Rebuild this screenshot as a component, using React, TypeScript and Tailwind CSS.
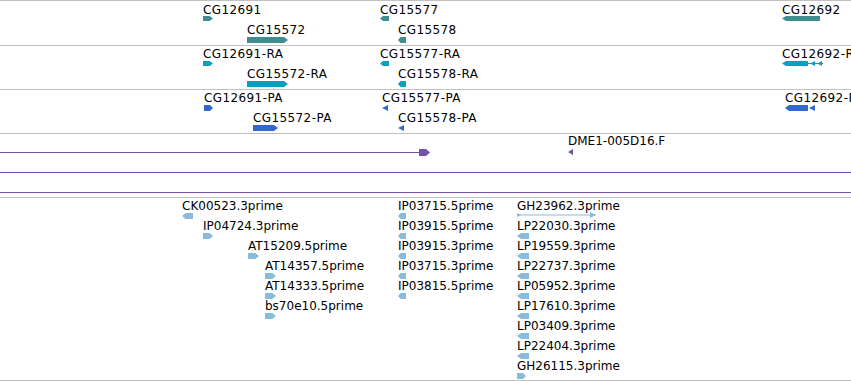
import React from 'react';

type Dir = 'right' | 'left';

type Feat = {
    label: string;
    lx: number; // label left
    ly: number; // label top
    gx: number; // glyph left
    gy: number; // glyph top
    w: number;
    h: number;
    dir: Dir;
    kind?: 'box' | 'line' | 'cds2' | 'cds1' | 'tiny';
};

const TEAL = '#3f8e92';
const CYAN = '#0aa0bf';
const BLUE = '#3368cc';
const EST = '#88bbdc';
const PURPLE = '#7052a8';

// glyph drawing
const Glyph = ({ f, color }: { f: Feat; color: string }) => {
    const { w, h, dir } = f;
    const kind = f.kind ?? 'box';
    const a = Math.min(4, Math.max(2, w / 3));
    let shape: React.ReactNode = null;

    if (kind === 'box') {
        const pts =
            dir === 'right'
                ? `0,0 ${w - a},0 ${w},${h / 2} ${w - a},${h} 0,${h}`
                : `${w},0 ${a},0 0,${h / 2} ${a},${h} ${w},${h}`;
        shape = <polygon points={pts} fill={color} />;
    } else if (kind === 'tiny') {
        const pts = dir === 'right' ? `0,0 ${w},${h / 2} 0,${h}` : `${w},0 0,${h / 2} ${w},${h}`;
        shape = <polygon points={pts} fill={color} />;
    } else if (kind === 'line') {
        shape = (
            <g fill={color} stroke={color}>
                <line x1={0} y1={h / 2} x2={w} y2={h / 2} strokeWidth={1} />
                <polygon points={`0,${h / 2 - 2} 4,${h / 2} 0,${h / 2 + 2}`} stroke="none" />
                <polygon points={`${w - 6},${h / 2 - 3} ${w},${h / 2} ${w - 6},${h / 2 + 3}`} stroke="none" />
            </g>
        );
    } else if (kind === 'cds2') {
        const b = 26;
        shape = (
            <g fill={color}>
                <polygon points={`${b},0 4,0 0,${h / 2} 4,${h} ${b},${h}`} />
                <rect x={b} y={h / 2 - 0.5} width={w - b} height={1} />
                <polygon points={`${b + 7},0 ${b + 2},${h / 2} ${b + 7},${h}`} />
                <polygon points={`${b + 14},0 ${b + 9},${h / 2} ${b + 14},${h}`} />
            </g>
        );
    } else if (kind === 'cds1') {
        const b = 23;
        shape = (
            <g fill={color}>
                <polygon points={`${b},0 4,0 0,${h / 2} 4,${h} ${b},${h}`} />
                <polygon points={`${w},0 ${b + 1},${h / 2} ${w},${h}`} />
            </g>
        );
    }

    return (
        <svg className="absolute" style={{ left: f.gx, top: f.gy }} width={w} height={h} viewBox={`0 0 ${w} ${h}`}>
            {shape}
        </svg>
    );
};

const Track = ({ top, height, color, feats, wide, children }: { top: number; height: number; color: string; feats: Feat[]; wide?: boolean; children?: React.ReactNode }) => (
    <div className="relative w-full border-b border-[#c0c0c0] overflow-hidden" style={{ height: height + 1 }}>
        {children}
        {feats.map((f, i) => (
            <React.Fragment key={i}>
                <span
                    className={
                        wide
                            ? 'absolute whitespace-nowrap text-[12px] leading-[14px] tracking-[0.4px] text-black'
                            : 'absolute whitespace-nowrap text-[12px] leading-[14px] text-black'
                    }
                    style={{ left: f.lx, top: f.ly - top }}
                >
                    {f.label}
                </span>
                <Glyph f={{ ...f, gy: f.gy - top }} color={color} />
            </React.Fragment>
        ))}
    </div>
);

const genes: Feat[] = [
    { label: 'CG12691', lx: 203, ly: 3, gx: 203, gy: 16, w: 10, h: 5, dir: 'right' },
    { label: 'CG15572', lx: 247, ly: 23, gx: 247, gy: 37, w: 41, h: 6, dir: 'right' },
    { label: 'CG15577', lx: 380, ly: 3, gx: 380, gy: 16, w: 9, h: 5, dir: 'left' },
    { label: 'CG15578', lx: 398, ly: 23, gx: 398, gy: 37, w: 8, h: 6, dir: 'left' },
    { label: 'CG12692', lx: 782, ly: 3, gx: 782, gy: 16, w: 38, h: 5, dir: 'left' },
];

const transcripts: Feat[] = [
    { label: 'CG12691-RA', lx: 203, ly: 47, gx: 203, gy: 61, w: 10, h: 5, dir: 'right' },
    { label: 'CG15572-RA', lx: 247, ly: 67, gx: 247, gy: 81, w: 41, h: 6, dir: 'right' },
    { label: 'CG15577-RA', lx: 380, ly: 47, gx: 380, gy: 61, w: 9, h: 5, dir: 'left' },
    { label: 'CG15578-RA', lx: 398, ly: 67, gx: 398, gy: 81, w: 8, h: 6, dir: 'left' },
    { label: 'CG12692-RA', lx: 782, ly: 47, gx: 782, gy: 61, w: 41, h: 5, dir: 'left', kind: 'cds2' },
];

const proteins: Feat[] = [
    { label: 'CG12691-PA', lx: 204, ly: 91, gx: 204, gy: 105, w: 9, h: 6, dir: 'right' },
    { label: 'CG15572-PA', lx: 253, ly: 111, gx: 253, gy: 125, w: 25, h: 6, dir: 'right' },
    { label: 'CG15577-PA', lx: 382, ly: 91, gx: 382, gy: 105, w: 6, h: 6, dir: 'left', kind: 'tiny' },
    { label: 'CG15578-PA', lx: 398, ly: 111, gx: 398, gy: 125, w: 6, h: 6, dir: 'left', kind: 'tiny' },
    { label: 'CG12692-PA', lx: 785, ly: 91, gx: 785, gy: 105, w: 30, h: 6, dir: 'left', kind: 'cds1' },
];

const clones: Feat[] = [
    { label: 'DME1-005D16.F', lx: 568, ly: 134, gx: 568, gy: 149, w: 5, h: 6, dir: 'left', kind: 'tiny' },
];

const row = (k: number) => 199 + 20 * k;
const est = (label: string, x: number, k: number, dir: Dir, w = 11): Feat => ({
    label, lx: x, ly: row(k), gx: x, gy: row(k) + 14, w, h: 6, dir,
});

const ests: Feat[] = [
    est('CK00523.3prime', 182, 0, 'left'),
    est('IP04724.3prime', 203, 1, 'right', 10),
    est('AT15209.5prime', 248, 2, 'right'),
    est('AT14357.5prime', 265, 3, 'right'),
    est('AT14333.5prime', 265, 4, 'right'),
    est('bs70e10.5prime', 265, 5, 'right'),
    est('IP03715.5prime', 398, 0, 'left', 8),
    est('IP03915.5prime', 398, 1, 'left', 8),
    est('IP03915.3prime', 398, 2, 'left', 8),
    est('IP03715.3prime', 398, 3, 'left', 8),
    est('IP03815.5prime', 398, 4, 'left', 8),
    { label: 'GH23962.3prime', lx: 517, ly: row(0), gx: 517, gy: row(0) + 13, w: 79, h: 6, dir: 'right', kind: 'line' },
    est('LP22030.3prime', 517, 1, 'left', 12),
    est('LP19559.3prime', 517, 2, 'left', 12),
    est('LP22737.3prime', 517, 3, 'left', 12),
    est('LP05952.3prime', 517, 4, 'left', 12),
    est('LP17610.3prime', 517, 5, 'left', 12),
    est('LP03409.3prime', 517, 6, 'left', 12),
    est('LP22404.3prime', 517, 7, 'left', 12),
    est('GH26115.3prime', 517, 8, 'right', 9),
];

export default function App() {
    return (
        <div className="w-[851px] h-[381px] overflow-hidden bg-white font-['DejaVu_Sans',sans-serif] border-t border-[#c0c0c0]">
            <Track top={1} height={44} color={TEAL} feats={genes} wide />
            <Track top={46} height={43} color={CYAN} feats={transcripts} wide />
            <Track top={90} height={43} color={BLUE} feats={proteins} wide />
            <Track top={134} height={63} color={PURPLE} feats={clones}>
                {/* clone lines */}
                <div className="relative mt-[18px] h-px w-[421px] bg-[#7052a8]">
                    <svg className="absolute left-[419px] top-[-3px]" width="11" height="7" viewBox="0 0 11 7">
                        <polygon points="0,0 7,0 11,3.5 7,7 0,7" fill={PURPLE} />
                    </svg>
                </div>
                <div className="mt-[19px] h-px w-full bg-[#7052a8]" />
                <div className="mt-[19px] h-px w-full bg-[#7052a8]" />
            </Track>
            <Track top={198} height={182} color={EST} feats={ests} />
        </div>
    );
}
